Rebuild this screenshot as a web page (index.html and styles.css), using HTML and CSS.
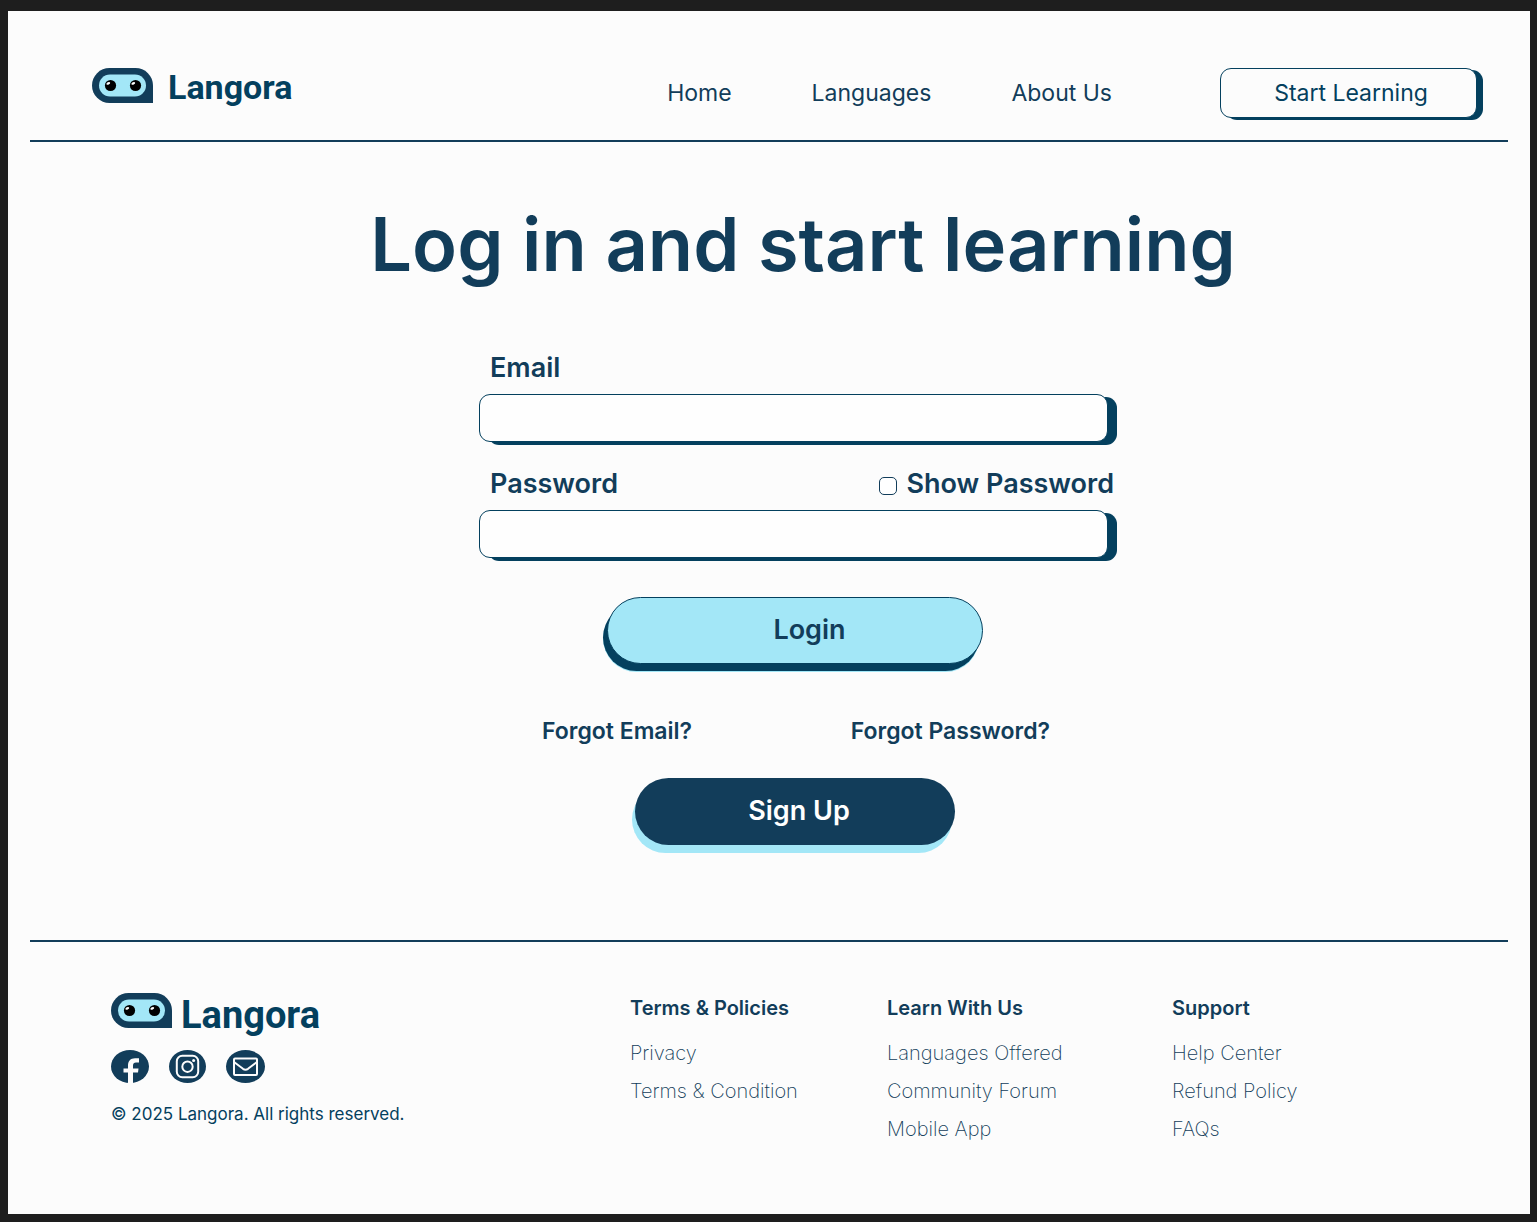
FILE: index.html
```html
<!DOCTYPE html>
<html lang="en">
<head>
  <meta charset="utf-8">
  <meta name="viewport" content="width=device-width, initial-scale=1">
  <title>Langora – Log in</title>
  <link rel="stylesheet" href="styles.css">
</head>
<body>
  <svg width="0" height="0" class="sprite" aria-hidden="true">
    <symbol id="robot" viewBox="0 0 61 35">
      <path fill="#123d5a" d="M17.500 0H43.500A17.500 17.500 0 0 1 61 17.500V35H17.500A17.500 17.500 0 0 1 17.500 0Z"/>
      <rect x="7" y="6.500" width="47" height="22" rx="11" fill="#a3e7f7"/>
      <circle cx="18.500" cy="17.500" r="5.600"/>
      <circle cx="43.500" cy="17.500" r="5.600"/>
      <ellipse cx="16.300" cy="15.400" rx="2" ry="1.200" fill="#fff" transform="rotate(-25 16.300 15.400)"/>
      <ellipse cx="41.300" cy="15.400" rx="2" ry="1.200" fill="#fff" transform="rotate(-25 41.300 15.400)"/>
    </symbol>
  </svg>

  <div class="page">
    <header class="header">
      <a class="logo" href="#">
        <svg width="61" height="35" aria-hidden="true"><use href="#robot"/></svg>
        <span>Langora</span>
      </a>
      <nav class="nav">
        <a href="#">Home</a>
        <a href="#">Languages</a>
        <a href="#">About Us</a>
      </nav>
      <button class="start" type="button">Start Learning</button>
    </header>

    <main class="main">
      <h1>Log in and start learning</h1>
      <form class="form">
        <div class="row"><label for="email">Email</label></div>
        <input class="field" id="email" type="email">
        <div class="row">
          <label for="password">Password</label>
          <span class="show">
            <input class="check" id="show" type="checkbox">
            <label for="show">Show Password</label>
          </span>
        </div>
        <input class="field" id="password" type="password">
        <button class="pill login" type="submit">Login</button>
        <div class="forgot">
          <a href="#">Forgot Email?</a>
          <a href="#">Forgot Password?</a>
        </div>
        <button class="pill signup" type="button">Sign Up</button>
      </form>
    </main>

    <footer class="footer">
      <div class="brand">
        <a class="logo logo-large" href="#">
          <svg width="61" height="35" aria-hidden="true"><use href="#robot"/></svg>
          <span>Langora</span>
        </a>
        <div class="social">
          <a href="#" aria-label="Facebook">
            <svg width="38" height="33" viewBox="0 0 38 33">
              <ellipse cx="19" cy="16.500" rx="19" ry="16.500" fill="#123d5a"/>
              <path fill="#fcfcfc" d="M17 33V22.500H12.500V18.500H17V15.500C17 11 19.500 8.200 24 8.200H28V12.500H25C23 12.500 22 13.500 22 15.500V18.500H27.500L27 22.500H22V33Z"/>
            </svg>
          </a>
          <a href="#" aria-label="Instagram">
            <svg width="37" height="33" viewBox="0 0 37 33">
              <ellipse cx="18.500" cy="16.500" rx="18.500" ry="16.500" fill="#123d5a"/>
              <g fill="none" stroke="#fcfcfc" stroke-width="2">
                <rect x="7.800" y="5.800" width="21.400" height="21.400" rx="5.500"/>
                <circle cx="18.500" cy="16.700" r="5.200"/>
              </g>
              <circle cx="24.600" cy="10.500" r="1.500" fill="#fcfcfc"/>
            </svg>
          </a>
          <a href="#" aria-label="Email">
            <svg width="39" height="33" viewBox="0 0 39 33">
              <ellipse cx="19.500" cy="16.500" rx="19.500" ry="16.500" fill="#123d5a"/>
              <g fill="none" stroke="#fcfcfc" stroke-width="2" stroke-linejoin="round">
                <rect x="8" y="8.500" width="23" height="16.500" rx="1"/>
                <path d="M8 12L17 18.800Q19.500 20.500 22 18.800L31 12"/>
              </g>
            </svg>
          </a>
        </div>
        <p class="copyright">© 2025 Langora. All rights reserved.</p>
      </div>
      <section class="links">
        <h2>Terms &amp; Policies</h2>
        <ul>
          <li><a href="#">Privacy</a></li>
          <li><a href="#">Terms &amp; Condition</a></li>
        </ul>
      </section>
      <section class="links">
        <h2>Learn With Us</h2>
        <ul>
          <li><a href="#">Languages Offered</a></li>
          <li><a href="#">Community Forum</a></li>
          <li><a href="#">Mobile App</a></li>
        </ul>
      </section>
      <section class="links">
        <h2>Support</h2>
        <ul>
          <li><a href="#">Help Center</a></li>
          <li><a href="#">Refund Policy</a></li>
          <li><a href="#">FAQs</a></li>
        </ul>
      </section>
    </footer>
  </div>
</body>
</html>
```
FILE: styles.css
```css
:root {
  --navy: #123d5a;
  --deep: #04405e;
  --sky: #a3e7f7;
  --paper: #fcfcfc;
}

* { box-sizing: border-box; }

body {
  margin: 0;
  padding: 11px 7px 8px 8px;
  background: #1e1e1e;
  color: var(--navy);
  font-family: Inter, "Liberation Sans", sans-serif;
}

a { color: inherit; text-decoration: none; }
button { font: inherit; cursor: pointer; }
h1, h2, p, ul { margin: 0; padding: 0; }
ul { list-style: none; }
svg { display: block; flex: none; }
.sprite { position: absolute; }

.page {
  min-height: calc(100vh - 19px);
  padding: 0 22px;
  background: var(--paper);
}

/* Header */
.header {
  display: flex;
  align-items: center;
  padding: 57px 31px 22px 62px;
  border-bottom: 2px solid var(--navy);
}

.logo {
  display: flex;
  align-items: flex-start;
  gap: 15px;
  height: 50px;
  color: var(--deep);
  font: 700 34px/38px Roboto, sans-serif;
}

.nav {
  display: flex;
  gap: 80px;
  margin-left: auto;
  margin-right: 108px;
  font-size: 23px;
  line-height: 28px;
}

.start {
  width: 257px;
  height: 50px;
  padding: 0 0 0 5px;
  border: 1px solid var(--deep);
  border-radius: 11px;
  background: var(--paper);
  box-shadow: 6px 2px 0 var(--deep);
  color: var(--deep);
  font-size: 23px;
}

/* Log-in form */
.main {
  display: flex;
  flex-direction: column;
  align-items: center;
  gap: 62px;
  padding: 58px 0 95px 58px;
}

h1 {
  padding-left: 10px;
  font-size: 74px;
  font-weight: 600;
  line-height: 88px;
}

.form {
  display: flex;
  flex-direction: column;
  align-items: center;
  width: 638px;
  max-width: 100%;
  font-size: 27px;
  font-weight: 600;
}

.row {
  display: flex;
  justify-content: space-between;
  width: 100%;
  padding: 1px 3px 0 11px;
  line-height: 34px;
}

.field {
  width: calc(100% - 9px);
  height: 48px;
  margin: 9px 9px 24px 0;
  padding: 0 16px;
  border: 1px solid var(--deep);
  border-radius: 11px;
  background: #fefefe;
  box-shadow: 9px 3px 0 var(--deep);
  color: var(--navy);
  font: inherit;
  font-size: 20px;
}

.show {
  display: flex;
  align-items: center;
  gap: 9px;
}

.check {
  appearance: none;
  width: 18px;
  height: 18px;
  margin: 4px 0 0;
  border: 1px solid var(--navy);
  border-radius: 5px;
  background: #fff;
}

.check:checked { background: var(--navy); }

.pill { border-radius: 34px; }

.login {
  width: 376px;
  height: 67px;
  margin: 15px 6px 0 0;
  padding: 0 0 2px 29px;
  border: 1px solid var(--deep);
  background: var(--sky);
  box-shadow: -4px 7px 0 var(--deep), -4px 8px 0 var(--sky);
  color: var(--navy);
}

.forgot {
  display: flex;
  justify-content: space-between;
  width: 508px;
  max-width: 100%;
  margin: 53px 4px 33px 0;
  font-size: 23px;
  line-height: 28px;
}

.signup {
  width: 320px;
  height: 67px;
  margin-right: 6px;
  padding: 0 0 2px 8px;
  border: 0;
  background: var(--navy);
  box-shadow: -3px 8px 0 var(--sky);
  color: #fff;
}

/* Footer */
.footer {
  display: grid;
  grid-template-columns: 519fr 257fr 285fr 336fr;
  padding: 51px 0 48px 81px;
  border-top: 2px solid var(--navy);
}

.logo-large {
  gap: 9px;
  height: 44px;
  font-size: 38px;
  line-height: 44px;
}

.social {
  display: flex;
  gap: 20px;
  margin: 13px 0 20px;
}

.copyright {
  color: var(--deep);
  font-size: 17px;
  line-height: 22px;
}

.links {
  padding-top: 3px;
  font-size: 20px;
  line-height: 24px;
}

.links h2 {
  margin-bottom: 21px;
  font-size: 20px;
  font-weight: 600;
}

.links ul {
  display: grid;
  gap: 14px;
  font-weight: 200;
}
```
